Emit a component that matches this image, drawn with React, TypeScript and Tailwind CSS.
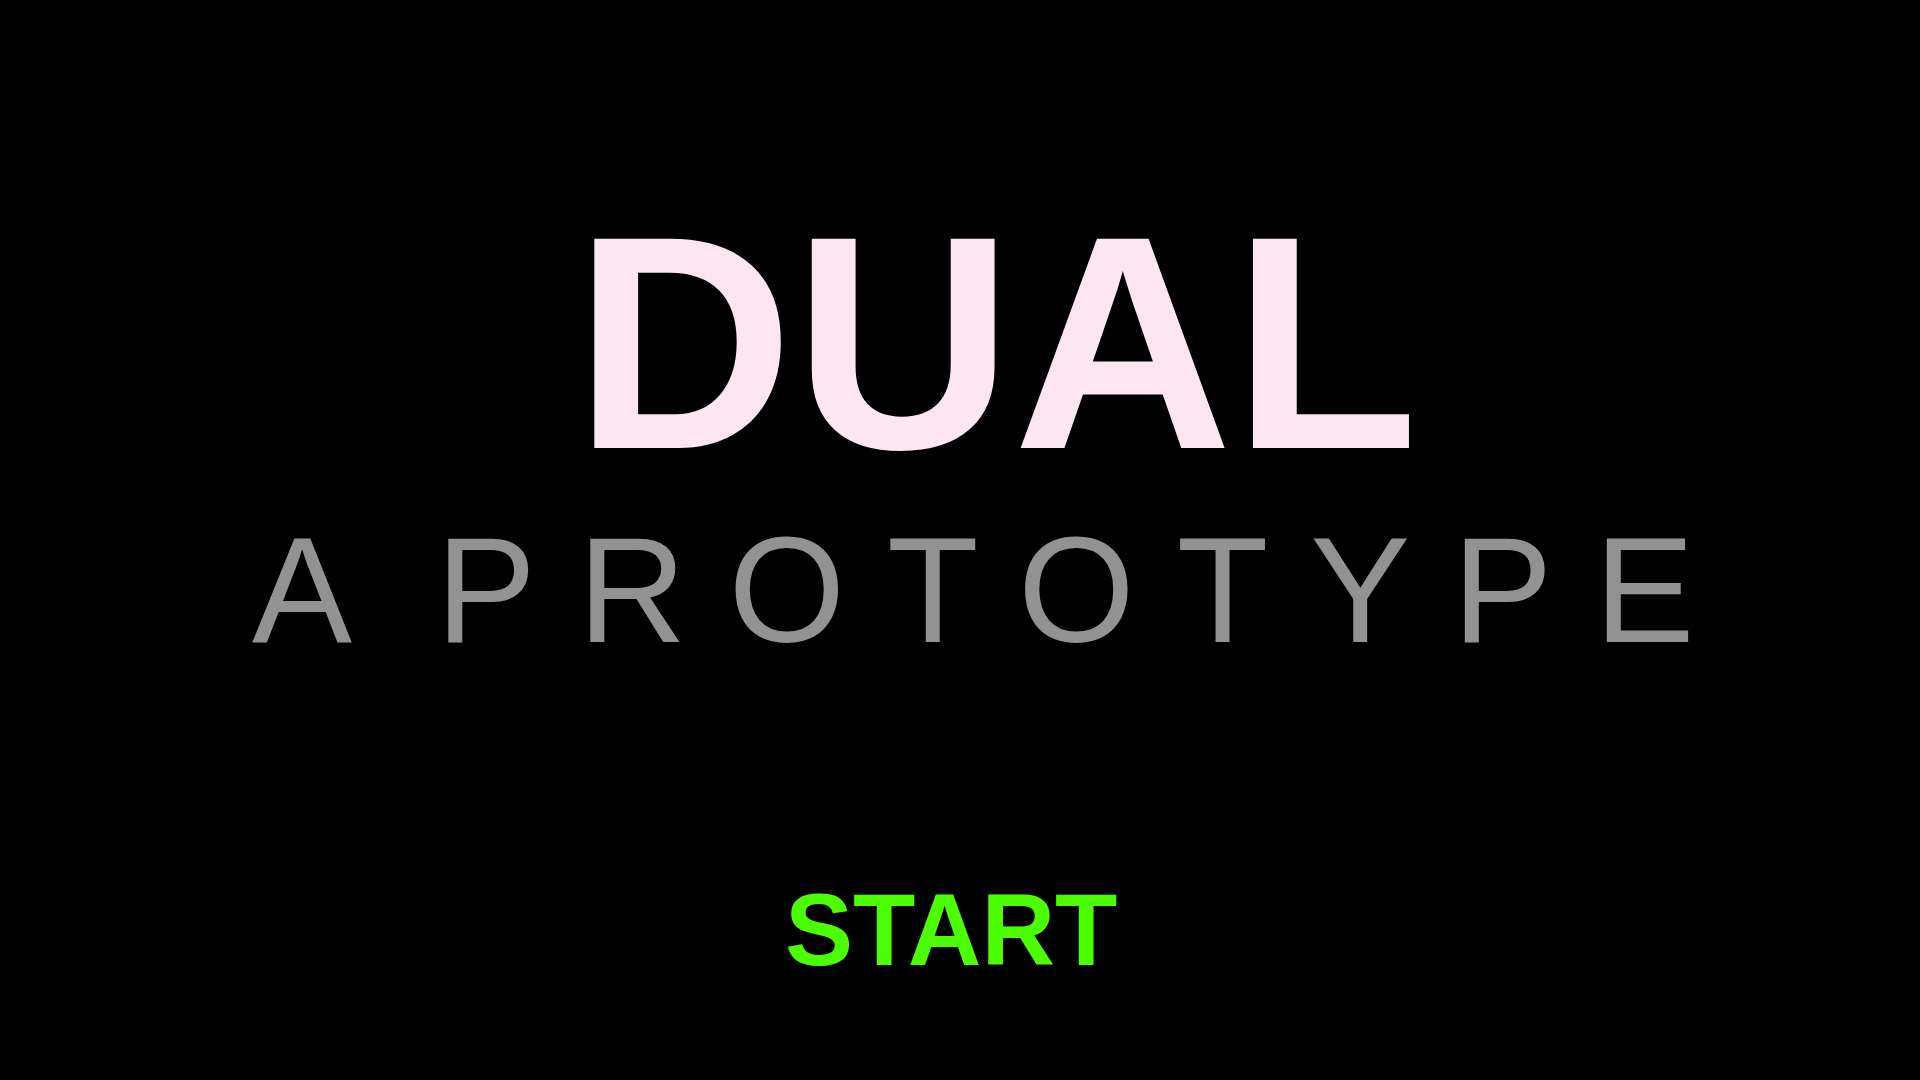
export default function App() {
  return (
    <div className="min-h-screen w-full bg-black overflow-hidden font-['Liberation_Sans',Arial,sans-serif]">
      <div className="flex flex-col items-start pt-[191px]">
        {/* Title */}
        <h1 className="pl-[574px] text-[304px] leading-none font-bold text-[#fde5f1] whitespace-nowrap">
          DUAL
        </h1>

        {/* Subtitle, widely tracked */}
        <p className="mt-[20px] pl-[252px] text-[150px] leading-none font-normal text-[#929292] tracking-[42px] whitespace-nowrap">
          <span>A</span>
          <span className="ml-[42px]">PROTOTYPE</span>
        </p>

        {/* Start button */}
        <button className="mt-[214px] ml-[785px] text-[102px] leading-none font-bold text-[#4cff00] whitespace-nowrap cursor-pointer">
          START
        </button>
      </div>
    </div>
  );
}
